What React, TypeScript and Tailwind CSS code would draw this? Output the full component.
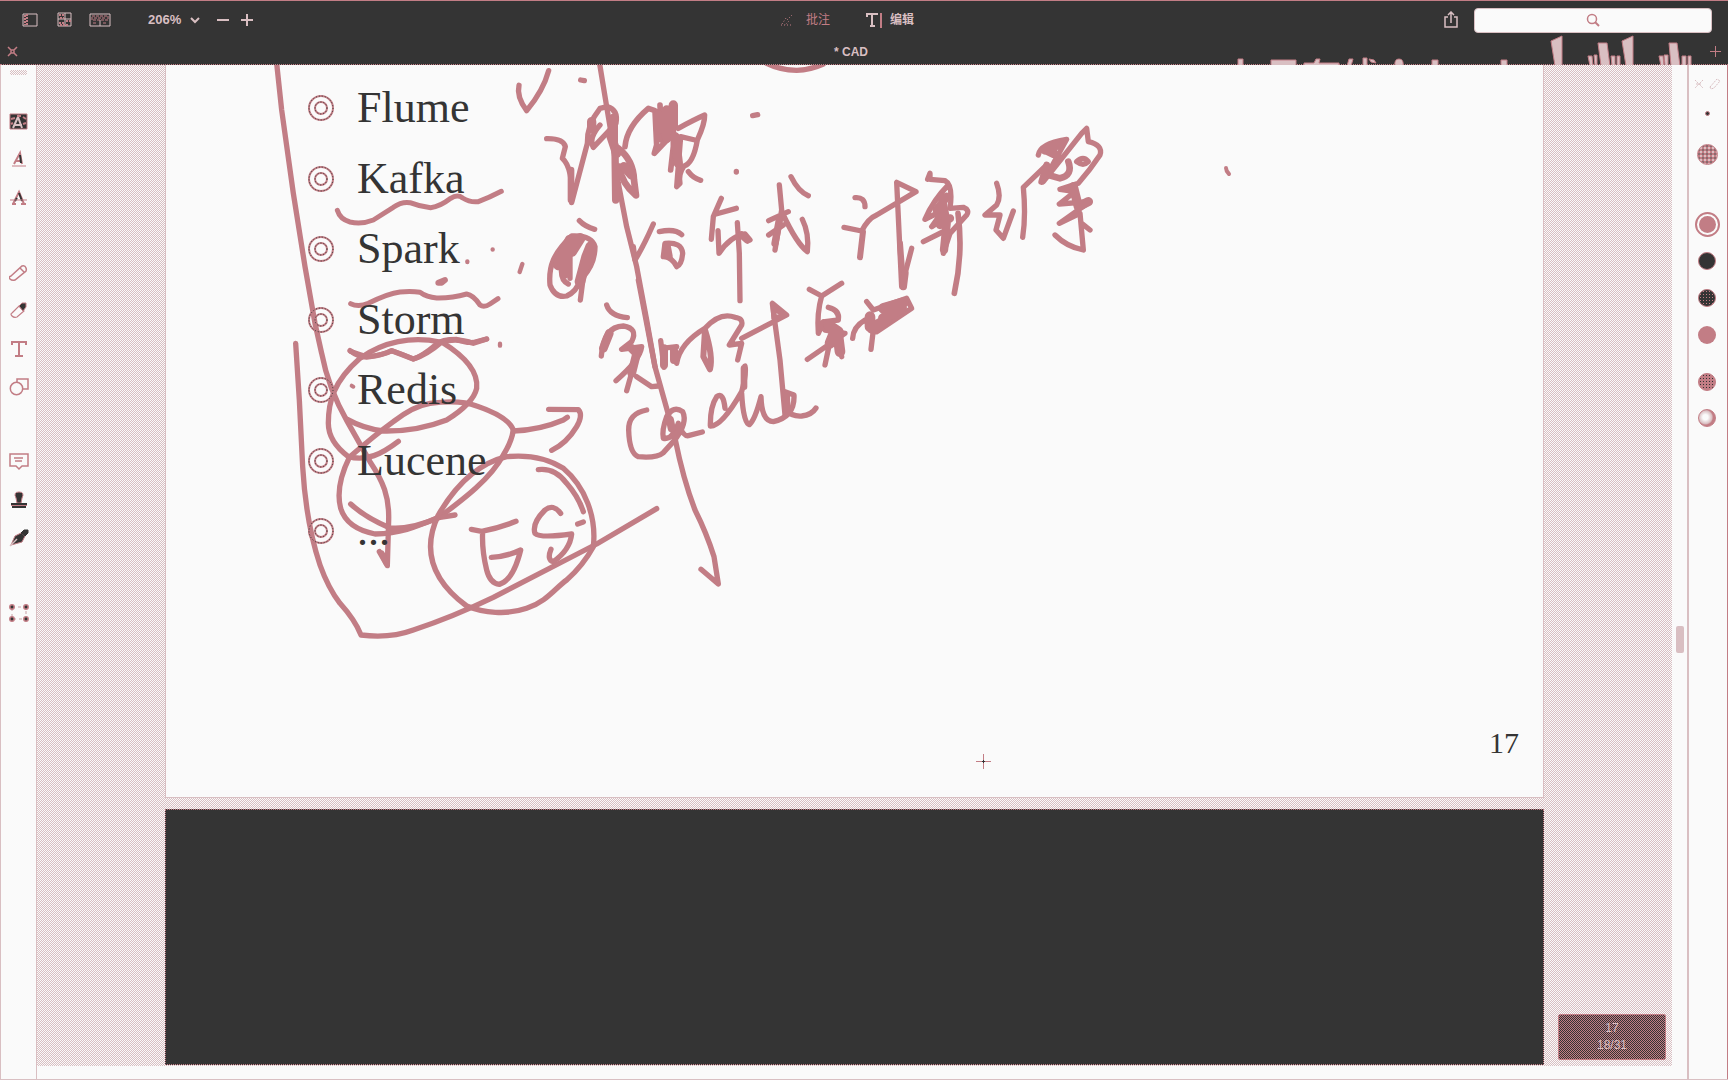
import React from "react";

const INK = "#c27d85";
const PALE = "#d9bfc2";
const DARK = "#343434";

const topics = ["Flume", "Kafka", "Spark", "Storm", "Redis", "Lucene", "..."];

function Bullet() {
  return (
    <svg width="28" height="28" viewBox="0 0 28 28" fill="none" className="shrink-0" aria-hidden="true">
      <g stroke={INK} strokeWidth="2">
        <circle cx="14" cy="14" r="12" />
        <circle cx="14" cy="14" r="6" />
      </g>
      <g stroke={DARK} strokeWidth="1" strokeDasharray="1 2">
        <circle cx="14" cy="14" r="12" />
        <circle cx="14" cy="14" r="6" />
      </g>
    </svg>
  );
}

/* Handwritten notes; the origin is the top left corner of the page. */
function Ink() {
  return (
    <svg
      className="pointer-events-none absolute left-0 top-0 h-[733px] w-[1378px]"
      viewBox="166 65 1378 733"
      fill="none"
      stroke={INK}
      strokeLinecap="round"
      strokeLinejoin="round"
      aria-hidden="true"
    >
      {/* underlines and dots beside the list */}
      <g transform="translate(260 60) scale(.33333)" strokeWidth="15">
        <path d="M232 451Q240 478 270 486Q305 494 340 480L400 442Q425 424 450 428Q480 440 512 443Q540 440 572 415Q592 402 608 414Q630 428 655 425Q690 412 724 394" />
        <path d="M272 731Q295 742 325 730Q385 700 420 696Q455 693 480 697Q500 712 530 714Q575 715 620 702Q640 705 660 735Q672 744 690 732L714 716" />
        <path d="M535 668L555 660L545 668Z" strokeWidth="18" />
        <path d="M622 604V606M698 568V569M779 636L787 612M720 851V857" strokeWidth="13" />
        <path d="M272 874Q295 882 320 890Q360 888 395 872Q430 884 460 897Q485 890 530 852Q545 838 590 838Q620 850 640 847L680 837" />
      </g>
      {/* circles, long arrows and the ES note */}
      <g transform="translate(260 320) scale(.33333)" strokeWidth="16">
        <path d="M50 -770L65 -630L100 -380L135 -160L165 10L185 100C200 180 225 240 262 305L330 425C370 485 388 530 386 600L382 737L358 695" />
        <path d="M365 700L380 730" strokeWidth="18" />
        <path d="M107 70L118 240L128 440C135 560 155 660 180 735Q205 805 240 850Q285 900 303 945Q390 956 460 930Q580 890 700 832L1010 672L1190 566" />
        <path d="M270 92Q300 115 330 110Q370 105 395 92Q430 105 460 117Q500 105 545 66Q590 52 640 70L680 57" />
        <path d="M540 66C455 48 370 65 300 115C220 185 205 245 205 310Q205 365 265 410C320 425 365 402 415 364" />
        <path d="M545 66C625 115 655 160 650 205Q640 250 560 300Q470 335 370 333Q310 325 262 298" />
        <path d="M275 197L280 200" strokeWidth="12" />
        <path d="M268 412Q345 345 400 305Q460 258 510 250Q600 238 650 258Q745 290 760 330Q755 365 730 405C690 480 600 545 540 590C460 625 420 640 345 642Q260 625 242 565Q225 500 268 412" />
        <path d="M272 552Q315 592 390 624Q450 630 540 592L585 585" />
        <path d="M740 410C655 430 590 490 535 585C485 690 515 780 620 858C670 878 740 886 800 865C860 845 885 805 920 780Q970 735 1000 680C1010 590 975 500 910 445Q840 400 740 410" />
        <path d="M835 449Q885 443 920 490Q955 530 970 575" />
        <path d="M760 333Q840 330 910 300L922 292M866 268L955 269Q970 285 950 320Q920 370 875 391" />
        <path d="M634 628L665 634Q715 625 768 604M668 634Q665 690 680 750Q690 790 718 793Q760 780 782 690Q740 710 694 712" />
        <path d="M902 580Q880 550 855 570Q815 610 825 640Q840 655 935 642Q930 690 880 725Q860 720 873 688" />
        <path d="M953 612L970 606" />
      </g>
      {/* first lines of handwriting */}
      <g transform="translate(500 60) scale(.33333)" strokeWidth="16">
        <path d="M57 76Q49 110 80 152Q130 92 146 32M242 60L253 62M758 167L773 164M709 334V336" />
        <path d="M800 10Q840 30 890 31Q930 30 970 12" />
        <path d="M299 12L320 140L340 260L355 370L380 500L410 620L440 780L465 920" />
        <path d="M140 236Q190 235 196 260L187 295Q220 325 215 428L262 250Q260 195 300 145L322 140Q355 150 348 190L280 262Q265 235 300 195" />
        <path d="M213 330V420" strokeWidth="20" />
        <path d="M275 185V205M340 175L340 200V250M330 220L350 280" strokeWidth="28" />
        <path d="M345 265L347 420" strokeWidth="22" />
        <path d="M355 265Q400 300 402 360L408 406Q365 370 358 320" strokeWidth="20" />
        <path d="M372 320L395 345" strokeWidth="28" />
        <path d="M375 260Q380 200 445 145L465 152L470 255L463 280L520 220M480 135L485 240M520 135V260L512 330" strokeWidth="17" />
        <path d="M500 150V235M475 165V210M520 135V200" strokeWidth="28" />
        <path d="M535 205Q580 180 614 165Q615 190 592 240Q580 310 552 318Q535 340 540 370L530 380L542 230L585 240M565 335Q580 355 602 361" />
        <path d="M525 230L535 310" strokeWidth="28" />
        <path d="M238 482Q255 500 284 508" />
        <path d="M215 528Q275 525 285 560Q285 610 250 650L241 720M215 528C160 580 145 620 150 675Q165 715 200 708Q230 695 240 660M185 620Q180 660 205 672M210 590V655" />
        <path d="M210 540L175 615M200 570L195 640M240 535L215 575M272 560L260 590L240 665" strokeWidth="32" />
        <path d="M460 492Q430 560 405 600L400 560M478 515Q525 505 545 524M495 550Q545 545 548 580Q545 615 530 620Q515 590 490 590Z" />
        <path d="M500 556L506 588" strokeWidth="24" />
        <path d="M664 415L640 470L634 538M648 462L709 445M654 512L657 580Q690 530 735 522L750 540M712 488L718 580L720 722" />
        <path d="M725 525L742 540" strokeWidth="22" />
        <path d="M838 375L845 450L825 570M806 482L865 455M806 525L850 495M850 465Q890 550 922 575Q928 520 907 478M873 350Q895 395 925 407" />
        <path d="M838 480L825 550" strokeWidth="22" />
      </g>
      {/* right half of the upper line */}
      <g transform="translate(800 100) scale(.33333)" strokeWidth="16">
        <path d="M165 293Q195 290 195 320M132 382L185 393Q205 355 230 345L348 275L290 247Q295 350 305 560L335 445" />
        <path d="M189 395L180 472M300 430L310 560" strokeWidth="18" />
        <path d="M315 520L310 560" strokeWidth="22" />
        <path d="M383 238L390 220V238L435 242Q460 255 450 325L490 322Q510 330 500 345L450 400L430 460L440 390L370 425M445 255Q400 300 375 358L430 330L395 380L440 350" />
        <path d="M425 290L440 370L432 450M420 375L450 355M440 290L410 330" strokeWidth="25" />
        <path d="M474 340Q490 460 463 580" strokeWidth="17" />
        <path d="M590 250Q605 290 590 315L555 345L600 345L588 390L610 415L640 333M668 412Q678 350 670 262L740 195" />
        <path d="M715 165Q720 130 800 118L730 245L845 100L860 85L865 125Q910 135 900 165Q870 210 835 250L780 268L825 275L778 312L870 305L778 370L840 340L850 450Q800 440 765 405M845 370L870 390" />
        <path d="M735 150L780 132M740 150L760 160M820 260L835 320L865 305" strokeWidth="28" />
        <path d="M740 195L725 245M805 185Q820 225 780 235L745 225" strokeWidth="20" />
        <path d="M830 185Q850 165 865 185Q850 200 830 185" />
      </g>
      {/* second line and "cache" */}
      <g transform="translate(540 280) scale(.33333)" strokeWidth="16">
        <path d="M295 0L345 260L405 475Q430 600 465 690Q500 760 522 830L535 912L483 868" />
        <path d="M200 75Q210 108 262 113M184 228Q190 140 250 138Q295 145 275 185L245 208L305 200Q300 240 228 302M290 225L260 332M290 290L335 320L355 318" />
        <path d="M190 205L208 160M275 205L290 220L275 280" strokeWidth="26" />
        <path d="M362 182L372 262L365 205L410 200M410 250Q420 190 495 145Q540 95 585 112Q610 115 605 135L568 195L605 190L593 240M605 175L740 105L697 70L720 240L735 405" />
        <path d="M372 205V255M402 210V240" strokeWidth="24" />
        <path d="M495 150L490 230L510 268Q520 230 495 150" strokeWidth="18" />
        <path d="M700 85L735 105L702 115Z" />
        <path d="M808 28L845 48L905 10M845 48Q830 100 835 160L850 125M865 82Q900 90 895 120L855 125M855 150L915 160L802 238M875 160L855 255M890 170L905 230" />
        <path d="M865 135L895 155M880 165L870 190M895 175L900 215" strokeWidth="32" />
        <path d="M938 175Q940 140 975 120L1000 150L993 208M980 65L1000 90L1100 55L1115 85L1010 155" />
        <path d="M1030 85L1090 68M1030 115L1085 85M995 145L1040 118M990 110V140" strokeWidth="32" />
        <path d="M320 390Q265 400 266 450Q268 520 295 530Q350 535 370 518L400 485Q445 430 428 395Q400 375 380 410Q365 450 370 475Q400 480 415 430Q430 470 445 467L487 456" />
        <path d="M390 420L395 445" strokeWidth="24" />
        <path d="M555 385Q550 335 530 350Q510 380 511 438Q545 440 605 335Q620 280 615 258M605 340Q610 430 628 434Q645 420 663 350Q665 425 700 425Q765 410 762 345L735 335L738 390Q755 410 785 408Q815 405 828 384" />
        <path d="M740 345L742 400M612 265V320" strokeWidth="20" />
      </g>
      <path d="M1226 168Q1226 171 1229 174" strokeWidth="4" />
    </svg>
  );
}

/* Foot and head of the station mark that shows above the sheet edge. */
function StationMark() {
  return (
    <svg
      className="pointer-events-none absolute bottom-0 right-9 h-[30px] w-[458px]"
      viewBox="1234 35 458 30"
      fill={PALE}
      stroke={INK}
      strokeWidth="1"
      aria-hidden="true"
    >
      <path d="M1238 66v-7h5v7M1271 66v-6h25v6M1304 66v-3h10l2-4h4l-1 4h20v3M1347 66l2-7h4l-2 7M1363 66v-8h4v8M1369 59l5 1 2 3-5-1zM1395 66q-1-7 4-7t4 7M1432 66v-6h6v6M1501 66v-6h6v6" />
      <path d="M1551 41l11-5v30h-7zM1598 43h9l3 23h-9zM1622 41l11-5v30h-7zM1669 43h8l3 23h-9z" />
      <path d="M1588 56h4l1 10h-3zM1594 55h3v11h-2zM1611 56h4v10h-3zM1617 56h3v10h-3zM1659 56h4l1 10h-3zM1664 55h4v11h-3zM1682 56h4v10h-4zM1688 56h3v10h-3z" />
    </svg>
  );
}

type Tool = { label: string; icon: React.ReactNode };

const toolGroups: Tool[][] = [
  [
    {
      label: "高亮",
      icon: (
        <>
          <path d="M1 2h17v15H1z" fill={DARK} stroke={INK} strokeWidth="1" />
          <path d="M4 16L9 5l4 11M5 13h8" stroke={PALE} strokeWidth="2" />
          <path d="M2 7l4-1M14 5l3 2M14 12l3-1M8 4h4M2 12l2-1" stroke={INK} strokeWidth="2" />
        </>
      ),
    },
    {
      label: "下划线",
      icon: (
        <>
          <path d="M5 14L11 3l2 11M7 11h6" strokeWidth="2" />
          <path d="M11 5l1 8" stroke={DARK} strokeWidth="2" />
          <path d="M3 16h14" strokeWidth="1" />
        </>
      ),
    },
    {
      label: "删除线",
      icon: (
        <>
          <path d="M4 16L10 4l5 12M3 16h4M12 16h5" strokeWidth="2" />
          <path d="M10 5l3 8M6 13l2-3" stroke={DARK} strokeWidth="2" />
          <path d="M1 12h17" strokeWidth="1" />
        </>
      ),
    },
  ],
  [
    { label: "铅笔", icon: <path d="M2 13L13 3q3-1 4 2t-1 4L6 17q-3 1-5-1t1-3zM11 5l4 4" strokeWidth="1.5" /> },
    {
      label: "橡皮",
      icon: (
        <>
          <path d="M3 12l7-7 5 5-7 6q-3 1-5-1t0-3z" stroke={INK} strokeWidth="1.2" />
          <path d="M10 5l3-3h4v4l-3 4z" fill={DARK} stroke={INK} />
        </>
      ),
    },
    { label: "文本", icon: <path d="M3 6V3h14v3M10 3v14M6 17h8" strokeWidth="2" /> },
    {
      label: "形状",
      icon: (
        <>
          <path d="M8 5V2h11v10h-5" strokeWidth="1.5" />
          <circle cx="7.500" cy="11.500" r="6.200" strokeWidth="1.500" />
        </>
      ),
    },
  ],
  [
    { label: "附注", icon: <path d="M1 2h18v12h-6l-3 3-3-3H1zM5 6h9M6 9h7" strokeWidth="1.5" /> },
    {
      label: "图章",
      icon: (
        <>
          <path d="M8 13L7 8Q4 2 10 2t3 6l-1 5z" fill={DARK} stroke={INK} strokeWidth="1" />
          <path d="M2 14h16M3 17h14" stroke={DARK} strokeWidth="2" />
          <path d="M2 15.500h16" strokeWidth="1" />
        </>
      ),
    },
    {
      label: "签名",
      icon: (
        <>
          <path d="M2 17L6 8l6-3 4 3-3 6z" fill={DARK} stroke={INK} strokeWidth="1" />
          <path d="M12 5l3-3h4v3l-3 3z" fill={DARK} stroke={DARK} />
          <path d="M1 18l7-7" stroke={PALE} strokeWidth="1.5" />
        </>
      ),
    },
  ],
  [
    {
      label: "选择",
      icon: (
        <>
          <path d="M3 4h14v12H3z" strokeDasharray="3 3" stroke={PALE} strokeWidth="1.5" />
          <g fill={DARK} stroke={INK} strokeWidth="1.500">
            <circle cx="3" cy="4" r="2.200" />
            <circle cx="17" cy="4" r="2.200" />
            <circle cx="3" cy="16" r="2.200" />
            <circle cx="17" cy="16" r="2.200" />
          </g>
        </>
      ),
    },
  ],
];

function ToolBar() {
  return (
    <aside className="flex w-[37px] shrink-0 flex-col border-x border-[#d9bfc2] bg-[#fafafa] pt-[5px]" aria-label="工具">
      <div className="mx-auto mb-7 h-[5px] w-[17px] bg-[conic-gradient(#d9bfc2_25%,#fafafa_0_50%,#d9bfc2_0_75%,#fafafa_0)] bg-[length:2px_2px]" />
      <div className="flex flex-col gap-[37px]">
        {toolGroups.map((group, i) => (
          <div key={i} className="flex flex-col">
            {group.map((tool) => (
              <button key={tool.label} type="button" aria-label={tool.label} className="flex h-[38px] w-full items-center justify-center">
                <svg width="20" height="20" viewBox="0 0 20 20" fill="none" stroke={INK}>
                  {tool.icon}
                </svg>
              </button>
            ))}
          </div>
        ))}
      </div>
    </aside>
  );
}

function SwatchBar() {
  return (
    <aside className="flex w-[41px] shrink-0 flex-col items-center border-l-2 border-r border-l-[#d9bfc2] border-r-[#c27d85] bg-[#fafafa] pl-1 pr-[6px] pt-3" aria-label="颜色">
      <div className="flex h-[14px] items-center gap-1">
        <svg width="12" height="12" viewBox="0 0 12 12" fill="none" stroke={PALE} strokeDasharray="2 1" aria-hidden="true">
          <path d="M2 2l8 8M10 2l-8 8M3 6h6" />
        </svg>
        <svg width="12" height="12" viewBox="0 0 12 12" fill="none" stroke={PALE} strokeDasharray="2 1" aria-hidden="true">
          <path d="M1 9l7-8 3 2-6 7-3 1z" />
        </svg>
      </div>
      <button type="button" aria-label="线宽" className="mt-5 size-[5px] rounded-full border border-[#c27d85] bg-[#343434]" />
      <button type="button" aria-label="图案" className="mt-7 size-[21px] rounded-full border border-[#c27d85] bg-[conic-gradient(#c27d85_25%,#d9bfc2_0_50%,#c27d85_0_75%,#8a6a6e_0)] bg-[length:4px_4px]" />
      <div className="mt-[47px] flex flex-col items-center">
        <button type="button" aria-label="当前颜色" className="size-[25px] rounded-full border-2 border-[#c27d85] bg-[#c27d85] bg-clip-content p-[2px]" />
        <button type="button" aria-label="黑色" className="mt-[15px] size-[18px] rounded-full border border-[#c27d85] bg-[#343434]" />
        <button type="button" aria-label="棕色" className="mt-[19px] size-[18px] rounded-full border border-[#c27d85] bg-[#343434] bg-[radial-gradient(#c27d85_1px,transparent_0)] bg-[length:3px_3px]" />
        <button type="button" aria-label="红色" className="mt-[19px] size-[18px] rounded-full bg-[#c27d85]" />
        <button type="button" aria-label="深红" className="mt-[29px] size-[18px] rounded-full border border-[#c27d85] bg-[#c27d85] bg-[radial-gradient(#343434_1px,transparent_0)] bg-[length:3px_3px]" />
        <button type="button" aria-label="浅色" className="mt-[18px] size-[18px] rounded-full border border-[#c27d85] bg-[radial-gradient(circle_at_40%_45%,#fafafa_20%,#d9bfc2_50%,#c27d85_60%)]" />
      </div>
    </aside>
  );
}

function Header() {
  return (
    <header className="relative flex shrink-0 flex-col border-t border-[#c27d85] bg-[#343434] text-[#d9bfc2]">
      <div className="flex h-[38px] items-center">
        <div className="flex flex-1 items-center pl-[22px]">
          <button type="button" aria-label="侧边栏">
            <svg width="16" height="16" viewBox="0 0 16 16" fill="none" stroke={PALE}>
              <path d="M1 2h14v12H1z" />
              <path d="M3 3v10M5 2v12" stroke={INK} strokeWidth="2" strokeDasharray="2 1" />
            </svg>
          </button>
          <button type="button" aria-label="缩略图" className="ml-[19px]">
            <svg width="16" height="16" viewBox="0 0 16 16" fill="none" stroke={PALE}>
              <path d="M1 1h13v13H1zM1 7h13M8 1v13" />
              <path d="M2 3h5M3 6h4M9 9h5M2 11h5M3 13h9" stroke={INK} strokeWidth="2" strokeDasharray="2 1" />
            </svg>
          </button>
          <button type="button" aria-label="页面" className="ml-4">
            <svg width="22" height="16" viewBox="0 0 22 16" fill="none" stroke={PALE}>
              <path d="M1 2h20v12H1zM11 8v6" />
              <path d="M3 4h16v4H3zM5 6h12M4 11h4M14 11h4" stroke={INK} strokeDasharray="3 1" />
            </svg>
          </button>
          <label className="ml-[37px] flex items-center">
            <span className="sr-only left-0 top-0">缩放</span>
            <select className="w-[42px] appearance-none bg-transparent text-[13px] font-bold leading-5 text-[#d9bfc2] outline-none" defaultValue="206%">
              <option>206%</option>
            </select>
            <svg width="10" height="8" viewBox="0 0 10 8" fill="none" stroke={PALE} strokeWidth="2" aria-hidden="true">
              <path d="M1 2l4 4 4-4" />
            </svg>
          </label>
          <button type="button" aria-label="缩小" className="ml-4">
            <svg width="14" height="14" viewBox="0 0 14 14" stroke={PALE} strokeWidth="2">
              <path d="M1 7h12" />
            </svg>
          </button>
          <button type="button" aria-label="放大" className="ml-[10px]">
            <svg width="14" height="14" viewBox="0 0 14 14" stroke={PALE} strokeWidth="2">
              <path d="M1 7h12M7 1v12" />
            </svg>
          </button>
        </div>
        <div className="flex items-center gap-9 pr-10 text-[12px] leading-5">
          <button type="button" className="flex items-center gap-3 text-[#c27d85]">
            <svg width="14" height="14" viewBox="0 0 14 14" fill="none" stroke={INK} strokeDasharray="1 2" aria-hidden="true">
              <path d="M1 12h12M2 11l4-6 3 3-4 4M9 5l4-4" />
            </svg>
            批注
          </button>
          <button type="button" className="flex items-center gap-2 font-bold">
            <svg width="16" height="15" viewBox="0 0 16 15" fill="none" stroke={PALE} strokeWidth="2" aria-hidden="true">
              <path d="M1 4V1h11M6 1v12M4 13h5" />
              <path d="M15 0v15" stroke={INK} />
            </svg>
            编辑
          </button>
        </div>
        <div className="flex flex-1 items-center justify-end gap-4 pr-4">
          <button type="button" aria-label="共享">
            <svg width="14" height="18" viewBox="0 0 14 18" fill="none" stroke={PALE} strokeWidth="1.500">
              <path d="M4 6H1v10h12V6h-3M7 12V2M4 4l3-3 3 3" />
            </svg>
          </button>
          <div className="relative">
            <input type="search" aria-label="搜索" className="block h-[25px] w-[238px] rounded-[4px] border border-[#d9bfc2] bg-[#fafafa] px-3 text-[13px] text-[#343434] outline-none" />
            <svg className="pointer-events-none absolute inset-0 m-auto" width="14" height="14" viewBox="0 0 14 14" fill="none" stroke={INK} strokeWidth="1.500" aria-hidden="true">
              <circle cx="6" cy="6" r="4.500" />
              <path d="M9 9l4 4" strokeWidth="2" />
            </svg>
          </div>
        </div>
      </div>
      <div className="flex h-[26px] items-center border-b border-dotted border-[#c27d85] px-[7px]">
        <button type="button" aria-label="关闭标签">
          <svg width="11" height="11" viewBox="0 0 11 11" fill="none" stroke={INK} strokeWidth="1.500">
            <path d="M1 1l3 3h3l3-3M1 10l3-3h3l3 3M4 4v3M7 4v3" />
          </svg>
        </button>
        <h1 className="flex-1 pr-[26px] text-center text-[12px] font-bold leading-4">* CAD</h1>
        <button type="button" aria-label="新标签" className="relative z-10">
          <svg width="11" height="11" viewBox="0 0 11 11" stroke={INK}>
            <path d="M0 5.500h11M5.500 0v11" />
          </svg>
        </button>
      </div>
      <StationMark />
    </header>
  );
}

export default function App() {
  return (
    <div className="flex h-screen flex-col overflow-hidden border-b border-[#d9bfc2] bg-[#fafafa] font-['Liberation_Sans','Noto_Sans_CJK_SC',sans-serif]">
      <Header />
      <main className="flex min-h-0 flex-1">
        <ToolBar />
        <div className="flex min-w-0 flex-1 flex-col">
          <div className="relative flex min-h-0 flex-1 flex-col gap-[11px] bg-[conic-gradient(#d9bfc2_25%,#fafafa_0_50%,#d9bfc2_0_75%,#fafafa_0)] bg-[length:2px_2px] px-32 pb-px">
            <section className="relative flex shrink-0 flex-col overflow-hidden border-x border-b border-[#d9bfc2] bg-[#fafafa]">
              <Ink />
              <ul className="relative mt-2 flex h-[493px] flex-col justify-between pl-[141px] font-['Liberation_Serif',serif] text-[44px] leading-[70px] text-[#343434]">
                {topics.map((topic) => (
                  <li key={topic} className="flex h-[70px] items-baseline gap-[22px]">
                    <Bullet />
                    {topic}
                  </li>
                ))}
              </ul>
              <p className="mb-[38px] mt-[161px] pr-6 text-right font-['Liberation_Serif',serif] text-[30px] leading-8 text-[#343434]">17</p>
              <svg className="absolute bottom-[28px] left-[810px]" width="15" height="15" viewBox="0 0 15 15" stroke={INK} aria-hidden="true">
                <path d="M0 7.500h15M7.500 0v15" />
                <path d="M6 7.500h3M7.500 6v3" stroke={DARK} />
              </svg>
            </section>
            <section className="min-h-0 flex-1 border border-dotted border-[#c27d85] bg-[#343434]" aria-label="18" />
            <div className="absolute bottom-[6px] right-[6px] flex h-[46px] w-[108px] flex-col items-center justify-center rounded-[2px] border border-[#c27d85] bg-[conic-gradient(#c27d85_25%,#343434_0_50%,#c27d85_0_75%,#343434_0)] bg-[length:2px_2px] text-[12px] leading-[17px] text-[#d9bfc2]">
              <span>17</span>
              <span>18/31</span>
            </div>
          </div>
          <div className="h-[13px] shrink-0" />
        </div>
        <div className="flex w-[15px] shrink-0 justify-center pt-[561px]">
          <div className="h-[27px] w-2 rounded-[2px] bg-[#d9bfc2]" />
        </div>
        <SwatchBar />
      </main>
    </div>
  );
}
